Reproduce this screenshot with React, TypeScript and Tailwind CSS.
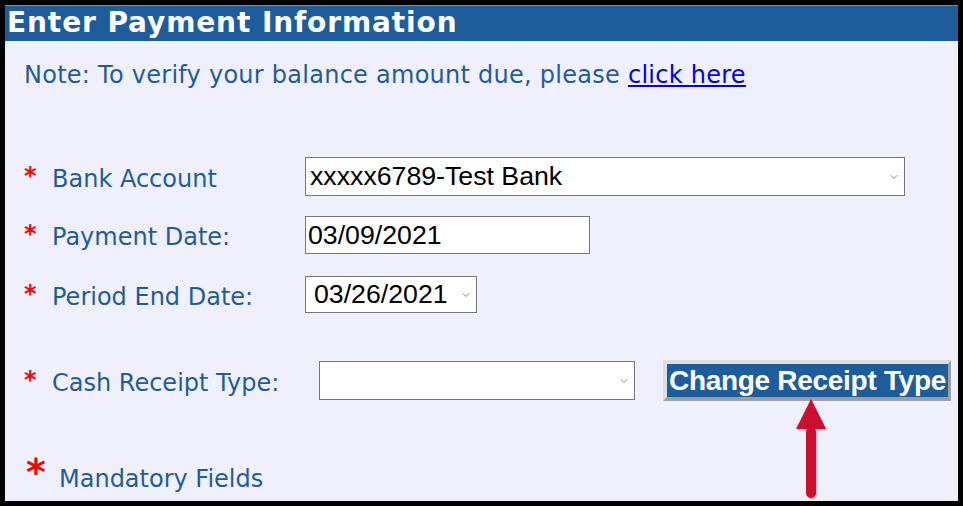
import { ChevronDown } from "lucide-react";

const verdana = "font-['Verdana','DejaVu_Sans',sans-serif]";
const arial = "font-['Liberation_Sans',Arial,sans-serif]";

function Label({ text }: { text: string }) {
  return (
    <div className={`flex w-[281px] shrink-0 translate-y-[2px] items-center text-[24px] text-[#1f5c9a] ${verdana}`}>
      <span className="w-[28px] -translate-y-[3px] font-bold text-[#ff0000]">*</span>
      <span>{text}</span>
    </div>
  );
}

function FakeSelect({ value, className }: { value: string; className: string }) {
  return (
    <div
      className={`flex items-center justify-between border border-[#767676] bg-white text-[26.7px] text-black ${arial} ${className}`}
    >
      <span className="leading-none">{value}</span>
      <ChevronDown className="mr-[4px] h-[12px] w-[12px] text-[#555]" strokeWidth={1.5} />
    </div>
  );
}

export default function App() {
  return (
    <div className="relative h-[506px] w-[963px] overflow-hidden bg-black p-[5px]">
      <div className="flex h-full flex-col bg-[#f0f0fd]">
        <div
          className={`h-[36px] border-t border-[#8a8a8a] bg-[#1e5d9b] pl-[2px] text-[28px] font-bold leading-[34px] tracking-[0.9px] text-white ${verdana}`}
        >
          Enter Payment Information
        </div>

        <p
          className={`mt-[20px] pl-[19px] text-[24px] leading-[28px] tracking-[0.26px] text-[#1f5c9a] ${verdana}`}
        >
          Note: To verify your balance amount due, please{" "}
          <a href="#" className="text-[#0000ee] underline">
            click here
          </a>
        </p>

        <div className="mt-[68px] flex flex-col pl-[19px]">
          <div className="flex h-[39px] items-center">
            <Label text="Bank Account" />
            <FakeSelect value="xxxxx6789-Test Bank" className="h-[39px] w-[600px] pl-[4px]" />
          </div>
          <div className="mt-[20px] flex h-[38px] items-center">
            <Label text="Payment Date:" />
            <div
              className={`flex h-[38px] w-[285px] items-center border border-[#767676] bg-white pl-[2px] text-[26.7px] text-black ${arial}`}
            >
              03/09/2021
            </div>
          </div>
          <div className="mt-[22px] flex h-[37px] items-center">
            <Label text="Period End Date:" />
            <FakeSelect value="03/26/2021" className="h-[37px] w-[172px] pl-[8px]" />
          </div>
        </div>

        <div className="mt-[47px] flex h-[41px] items-center pl-[19px]">
          <div
            className={`flex w-[295px] shrink-0 translate-y-[2px] items-center text-[24px] text-[#1f5c9a] ${verdana}`}
          >
            <span className="w-[28px] -translate-y-[3px] font-bold text-[#ff0000]">*</span>
            <span>Cash Receipt Type:</span>
          </div>
          <FakeSelect value="" className="h-[39px] w-[316px]" />
          <button
            className={`ml-[28px] flex h-[41px] w-[288px] items-center justify-center overflow-visible whitespace-nowrap border-t-[4px] border-l-[4px] border-r-[3px] border-b-[4px] border-t-[#dedede] border-l-[#dedede] border-r-[#9e9e9e] border-b-[#9e9e9e] bg-[#1e5d9b] text-[28px] font-bold leading-none tracking-[-0.3px] text-white ${arial}`}
          >
            Change Receipt Type
          </button>
        </div>

        <div className={`mt-[56px] flex items-start pl-[21px] text-[#1f5c9a] ${verdana}`}>
          <span className="w-[33px] text-[38px] font-bold leading-[30px] text-[#ff0000]">*</span>
          <span className="mt-[8px] text-[24px] leading-[28px]">Mandatory Fields</span>
        </div>
      </div>

      <svg
        className="absolute left-[790px] top-[395px]"
        width="44"
        height="108"
        viewBox="790 395 44 108"
      >
        <g fill="#8a8a8a" opacity="0.5" transform="translate(1.5 1.5)">
          <polygon points="811,399 826,429 796,429" />
          <rect x="806" y="427" width="10" height="71" rx="5" />
        </g>
        <g fill="#cc0e2f">
          <polygon points="811,399 826,429 796,429" />
          <rect x="806" y="427" width="10" height="71" rx="5" />
        </g>
      </svg>
    </div>
  );
}
